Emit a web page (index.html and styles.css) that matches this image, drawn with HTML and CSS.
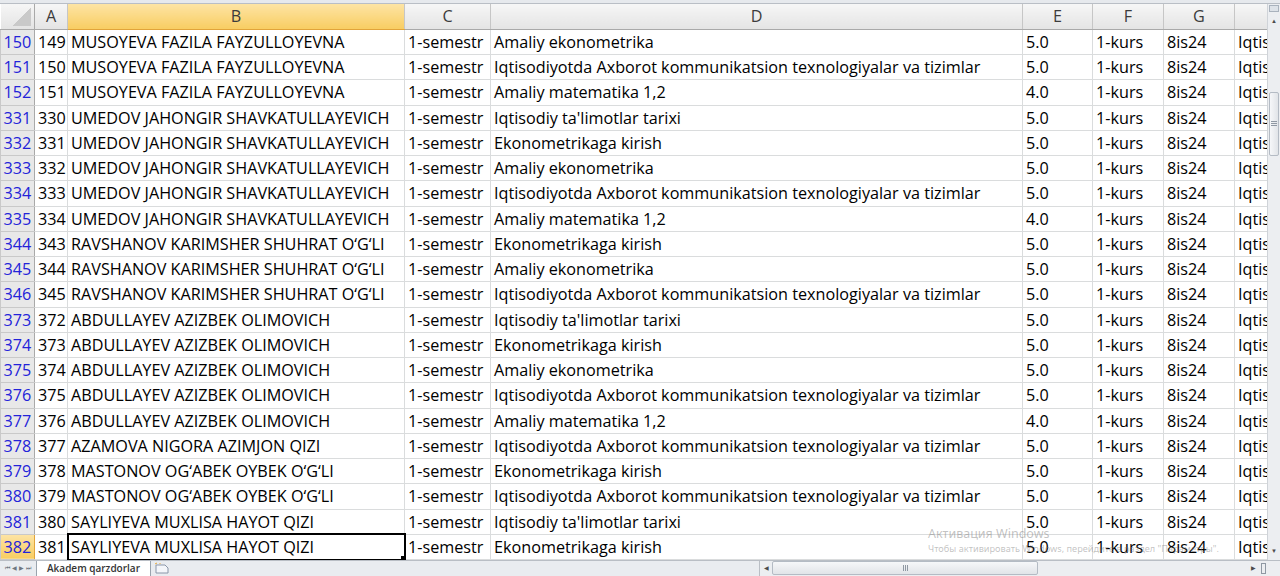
FILE: index.html
```html
<!DOCTYPE html>
<html lang="uz">
<head>
    <meta charset="UTF-8">
    <title>Akadem qarzdorlar</title>
    <link rel="stylesheet" href="styles.css">
</head>
<body>
<div class="app">
    <div class="topband"></div>
    <div class="main">
        <div class="sheet">
            <table class="grid">
                <colgroup>
                    <col style="width:34px"><col style="width:33px"><col style="width:337px"><col style="width:86px">
                    <col style="width:532px"><col style="width:70px"><col style="width:71px"><col style="width:71px"><col style="width:33px">
                </colgroup>
                <thead>
                    <tr>
                        <th class="corner"></th>
                        <th>A</th><th class="sel">B</th><th>C</th><th>D</th><th>E</th><th>F</th><th>G</th><th></th>
                    </tr>
                </thead>
                <tbody>
                    <tr><td class="rh">150</td><td>149</td><td>MUSOYEVA FAZILA FAYZULLOYEVNA</td><td>1-semestr</td><td>Amaliy ekonometrika</td><td>5.0</td><td>1-kurs</td><td>8is24</td><td>Iqtisodiyot</td></tr>
                    <tr><td class="rh">151</td><td>150</td><td>MUSOYEVA FAZILA FAYZULLOYEVNA</td><td>1-semestr</td><td>Iqtisodiyotda Axborot kommunikatsion texnologiyalar va tizimlar</td><td>5.0</td><td>1-kurs</td><td>8is24</td><td>Iqtisodiyot</td></tr>
                    <tr><td class="rh">152</td><td>151</td><td>MUSOYEVA FAZILA FAYZULLOYEVNA</td><td>1-semestr</td><td>Amaliy matematika 1,2</td><td>4.0</td><td>1-kurs</td><td>8is24</td><td>Iqtisodiyot</td></tr>
                    <tr><td class="rh">331</td><td>330</td><td>UMEDOV JAHONGIR SHAVKATULLAYEVICH</td><td>1-semestr</td><td>Iqtisodiy ta'limotlar tarixi</td><td>5.0</td><td>1-kurs</td><td>8is24</td><td>Iqtisodiyot</td></tr>
                    <tr><td class="rh">332</td><td>331</td><td>UMEDOV JAHONGIR SHAVKATULLAYEVICH</td><td>1-semestr</td><td>Ekonometrikaga kirish</td><td>5.0</td><td>1-kurs</td><td>8is24</td><td>Iqtisodiyot</td></tr>
                    <tr><td class="rh">333</td><td>332</td><td>UMEDOV JAHONGIR SHAVKATULLAYEVICH</td><td>1-semestr</td><td>Amaliy ekonometrika</td><td>5.0</td><td>1-kurs</td><td>8is24</td><td>Iqtisodiyot</td></tr>
                    <tr><td class="rh">334</td><td>333</td><td>UMEDOV JAHONGIR SHAVKATULLAYEVICH</td><td>1-semestr</td><td>Iqtisodiyotda Axborot kommunikatsion texnologiyalar va tizimlar</td><td>5.0</td><td>1-kurs</td><td>8is24</td><td>Iqtisodiyot</td></tr>
                    <tr><td class="rh">335</td><td>334</td><td>UMEDOV JAHONGIR SHAVKATULLAYEVICH</td><td>1-semestr</td><td>Amaliy matematika 1,2</td><td>4.0</td><td>1-kurs</td><td>8is24</td><td>Iqtisodiyot</td></tr>
                    <tr><td class="rh">344</td><td>343</td><td>RAVSHANOV KARIMSHER SHUHRAT O‘G‘LI</td><td>1-semestr</td><td>Ekonometrikaga kirish</td><td>5.0</td><td>1-kurs</td><td>8is24</td><td>Iqtisodiyot</td></tr>
                    <tr><td class="rh">345</td><td>344</td><td>RAVSHANOV KARIMSHER SHUHRAT O‘G‘LI</td><td>1-semestr</td><td>Amaliy ekonometrika</td><td>5.0</td><td>1-kurs</td><td>8is24</td><td>Iqtisodiyot</td></tr>
                    <tr><td class="rh">346</td><td>345</td><td>RAVSHANOV KARIMSHER SHUHRAT O‘G‘LI</td><td>1-semestr</td><td>Iqtisodiyotda Axborot kommunikatsion texnologiyalar va tizimlar</td><td>5.0</td><td>1-kurs</td><td>8is24</td><td>Iqtisodiyot</td></tr>
                    <tr><td class="rh">373</td><td>372</td><td>ABDULLAYEV AZIZBEK OLIMOVICH</td><td>1-semestr</td><td>Iqtisodiy ta'limotlar tarixi</td><td>5.0</td><td>1-kurs</td><td>8is24</td><td>Iqtisodiyot</td></tr>
                    <tr><td class="rh">374</td><td>373</td><td>ABDULLAYEV AZIZBEK OLIMOVICH</td><td>1-semestr</td><td>Ekonometrikaga kirish</td><td>5.0</td><td>1-kurs</td><td>8is24</td><td>Iqtisodiyot</td></tr>
                    <tr><td class="rh">375</td><td>374</td><td>ABDULLAYEV AZIZBEK OLIMOVICH</td><td>1-semestr</td><td>Amaliy ekonometrika</td><td>5.0</td><td>1-kurs</td><td>8is24</td><td>Iqtisodiyot</td></tr>
                    <tr><td class="rh">376</td><td>375</td><td>ABDULLAYEV AZIZBEK OLIMOVICH</td><td>1-semestr</td><td>Iqtisodiyotda Axborot kommunikatsion texnologiyalar va tizimlar</td><td>5.0</td><td>1-kurs</td><td>8is24</td><td>Iqtisodiyot</td></tr>
                    <tr><td class="rh">377</td><td>376</td><td>ABDULLAYEV AZIZBEK OLIMOVICH</td><td>1-semestr</td><td>Amaliy matematika 1,2</td><td>4.0</td><td>1-kurs</td><td>8is24</td><td>Iqtisodiyot</td></tr>
                    <tr><td class="rh">378</td><td>377</td><td>AZAMOVA NIGORA AZIMJON QIZI</td><td>1-semestr</td><td>Iqtisodiyotda Axborot kommunikatsion texnologiyalar va tizimlar</td><td>5.0</td><td>1-kurs</td><td>8is24</td><td>Iqtisodiyot</td></tr>
                    <tr><td class="rh">379</td><td>378</td><td>MASTONOV OG‘ABEK OYBEK O‘G‘LI</td><td>1-semestr</td><td>Ekonometrikaga kirish</td><td>5.0</td><td>1-kurs</td><td>8is24</td><td>Iqtisodiyot</td></tr>
                    <tr><td class="rh">380</td><td>379</td><td>MASTONOV OG‘ABEK OYBEK O‘G‘LI</td><td>1-semestr</td><td>Iqtisodiyotda Axborot kommunikatsion texnologiyalar va tizimlar</td><td>5.0</td><td>1-kurs</td><td>8is24</td><td>Iqtisodiyot</td></tr>
                    <tr><td class="rh">381</td><td>380</td><td>SAYLIYEVA MUXLISA HAYOT QIZI</td><td>1-semestr</td><td>Iqtisodiy ta'limotlar tarixi</td><td>5.0</td><td>1-kurs</td><td>8is24</td><td>Iqtisodiyot</td></tr>
                    <tr><td class="rh sel">382</td><td>381</td><td class="active">SAYLIYEVA MUXLISA HAYOT QIZI</td><td>1-semestr</td><td>Ekonometrikaga kirish</td><td>5.0</td><td>1-kurs</td><td>8is24</td><td>Iqtisodiyot</td></tr>
                </tbody>
            </table>
        </div>
        <div class="vscroll">
            <div class="split"></div>
            <div class="arrow">&#9650;</div>
            <div class="track"><div class="thumb"><span class="grip"></span></div></div>
            <div class="arrow">&#9660;</div>
        </div>
    </div>
    <div class="bottom">
        <div class="tabnav">
            <span>&#9198;</span><span>&#9664;</span><span>&#9654;</span><span>&#9197;</span>
        </div>
        <div class="tab">Akadem qarzdorlar</div>
        <div class="newtab">
            <svg width="16" height="12" viewBox="0 0 16 12"><path d="M2 3h9l3 3v5H2z" fill="#f4f6fa" stroke="#8a96a8"/><path d="M1 2l2-1M6 1v1" stroke="#e8a93a"/></svg>
        </div>
        <div class="hgap"></div>
        <div class="hscroll">
            <span class="harrow">&#9664;</span>
            <div class="hthumb"><span class="hgrip"></span></div>
            <div class="htrack"></div>
            <span class="harrow">&#9654;</span>
            <span class="hbox"></span>
        </div>
    </div>

    <div class="watermark">
        <div class="wm-title">Активация Windows</div>
        <div class="wm-sub">Чтобы активировать Windows, перейдите в раздел "Параметры".</div>
    </div>
</div>
</body>
</html>
```

FILE: styles.css
```css
body {
    margin: 0;
    background: #ffffff;
    font-family: "Open Sans", sans-serif;
    overflow: hidden;
}

.app {
    width: 1280px;
    height: 576px;
    display: flex;
    flex-direction: column;
    position: relative;
    overflow: hidden;
}

.topband {
    height: 3px;
    background: #e6e9ed;
    border-bottom: 1px solid #b9bec5;
}

.main {
    display: flex;
    height: 556px;
}

.sheet {
    width: 1267px;
    overflow: hidden;
}

.grid {
    border-collapse: collapse;
    table-layout: fixed;
    width: 1267px;
    font-size: 16.2px;
}

.grid th {
    height: 25px;
    padding: 0;
    font-weight: normal;
    color: #3c3c3c;
    text-align: center;
    background: linear-gradient(#f6f6f6, #e4e4e4);
    border-right: 1px solid #c6c6c6;
    border-bottom: 1px solid #a9a9a9;
}

.grid th.sel {
    background: linear-gradient(#fde4a4, #f8cd62);
    border-bottom-color: #e1a43a;
}

.grid th.corner {
    position: relative;
    border-right-color: #a9a9a9;
}

.grid th.corner::after {
    content: "";
    position: absolute;
    right: 3px;
    bottom: 3px;
    width: 18px;
    height: 18px;
    background: linear-gradient(to top left, #c9c9c9 50%, transparent 50%);
}

.grid tbody tr {
    height: 25.25px;
}

.grid td {
    padding: 0 3px;
    white-space: nowrap;
    overflow: hidden;
    color: #000;
    border: 1px solid #dadcdd;
}

.grid td.rh {
    padding: 0;
    text-align: center;
    color: #2323d9;
    background: #e8e8e8;
    border-color: #c9c9c9;
    border-right: 1px solid #a9a9a9;
}

.grid td.rh.sel {
    background: linear-gradient(#fde4a4, #f8cd62);
    border-right-color: #e1a43a;
}

.grid td.active {
    position: relative;
    outline: 2px solid #000;
    outline-offset: -1px;
}

.grid td.active::after {
    content: "";
    position: absolute;
    right: -3px;
    bottom: -3px;
    width: 5px;
    height: 5px;
    background: #000;
    border: 1px solid #fff;
}

/* vertical scrollbar */
.vscroll {
    width: 12px;
    display: flex;
    flex-direction: column;
    background: #eceef1;
    border-left: 1px solid #cfd3d8;
}

.split {
    height: 5px;
    margin: 1px 1px 0;
    background: #dde2e8;
    border: 1px solid #a9b2bd;
}

.arrow {
    height: 18px;
    font-size: 6px;
    color: #4b4b4b;
    text-align: center;
    line-height: 18px;
}

.track {
    flex: 1;
    padding-top: 62px;
}

.thumb {
    height: 62px;
    margin: 0 1px;
    background: linear-gradient(to right, #f6f7f9, #e1e4e8);
    border: 1px solid #b4bbc4;
    border-radius: 2px;
    display: flex;
    align-items: center;
    justify-content: center;
}

.grip {
    width: 6px;
    height: 5px;
    background: repeating-linear-gradient(#8f98a3 0 1px, transparent 1px 2px);
}

/* sheet tabs + horizontal scrollbar */
.bottom {
    height: 16px;
    display: flex;
    align-items: stretch;
    background: #e9ecf0;
    border-top: 1px solid #b9bec5;
    font-size: 11px;
}

.tabnav {
    width: 36px;
    display: flex;
    gap: 2px;
    align-items: center;
    justify-content: center;
    font-size: 6px;
    color: #6f7780;
}

.tab {
    padding: 0 10px;
    background: #ffffff;
    color: #333;
    font-weight: 600;
    font-size: 10px;
    line-height: 15px;
    border-left: 1px solid #9aa3ad;
    border-right: 1px solid #9aa3ad;
}

.newtab {
    width: 22px;
    display: flex;
    align-items: center;
    justify-content: center;
}

.hgap {
    flex: 1;
}

.hscroll {
    width: 520px;
    display: flex;
    align-items: center;
    background: #eceef1;
    border-left: 1px solid #b9bec5;
}

.hthumb {
    width: 264px;
    height: 12px;
    background: linear-gradient(#f6f7f9, #e1e4e8);
    border: 1px solid #b4bbc4;
    border-radius: 2px;
    display: flex;
    align-items: center;
    justify-content: center;
}

.hgrip {
    width: 5px;
    height: 6px;
    background: repeating-linear-gradient(to right, #8f98a3 0 1px, transparent 1px 2px);
}

.htrack {
    flex: 1;
}

.harrow {
    width: 12px;
    text-align: center;
    font-size: 6px;
    color: #4b4b4b;
}

.hbox {
    width: 3px;
    height: 9px;
    border: 1px solid #8f98a3;
    margin: 0 14px 0 2px;
}

/* activation overlay */
.watermark {
    position: absolute;
    left: 928px;
    top: 525px;
    color: rgba(120, 120, 120, 0.45);
    font-family: "Noto Sans", sans-serif;
    pointer-events: none;
}

.wm-title {
    font-size: 12.5px;
    line-height: 17px;
}

.wm-sub {
    font-size: 9.2px;
    line-height: 13px;
}
```
